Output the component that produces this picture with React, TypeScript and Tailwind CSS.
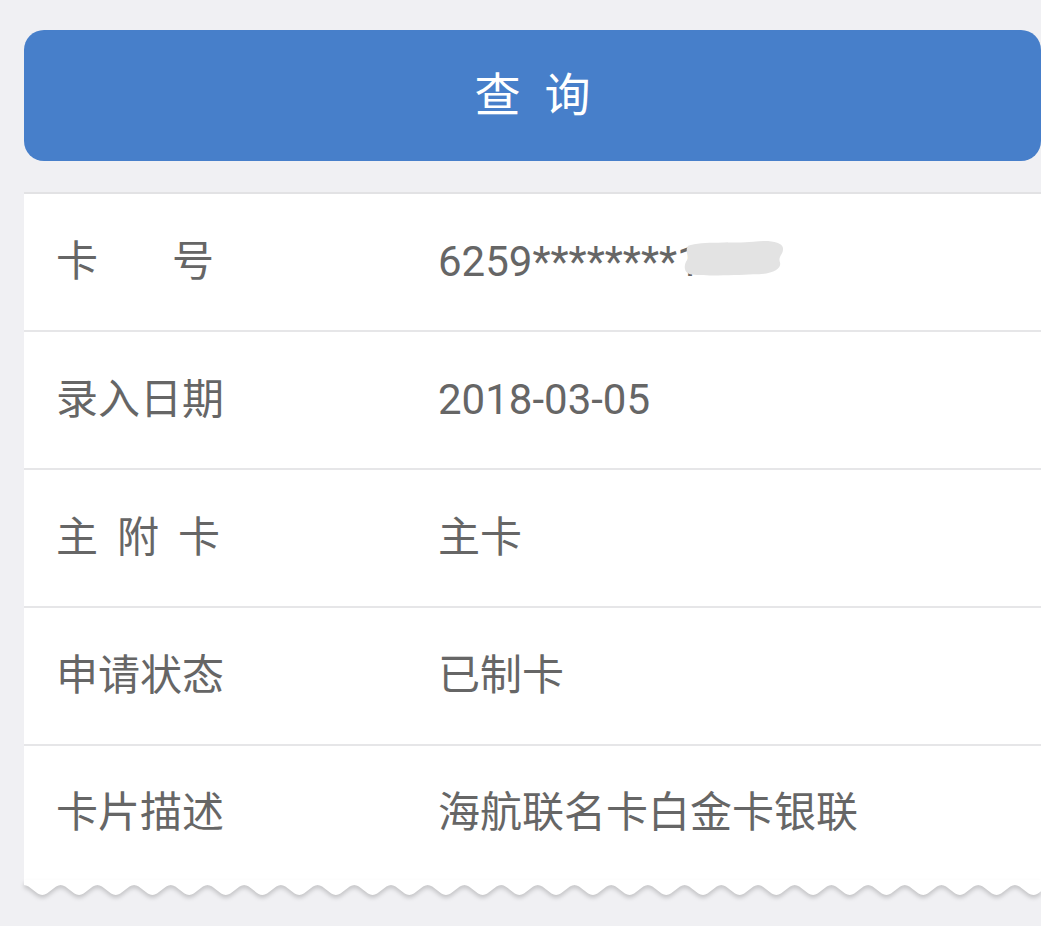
const rows: { label: string[]; value: string; w: string }[] = [
  { label: ["卡", "号"], value: "6259********1", w: "w-[158px]" },
  { label: ["录入日期"], value: "2018-03-05", w: "w-[168px]" },
  { label: ["主", "附", "卡"], value: "主卡", w: "w-[164px]" },
  { label: ["申请状态"], value: "已制卡", w: "w-[168px]" },
  { label: ["卡片描述"], value: "海航联名卡白金卡银联", w: "w-[168px]" },
];

// scalloped bottom edge of the receipt panel
const wavePath = (() => {
  const w = 1017;
  const p = 36.7;
  let d = "M0,0 L0,5";
  for (let x = 0; x < w + p; x += p) {
    d += ` C${(x + p / 6).toFixed(1)},5 ${(x + p / 3).toFixed(1)},15 ${(x + p / 2).toFixed(1)},15`;
    d += ` C${(x + (2 * p) / 3).toFixed(1)},15 ${(x + (5 * p) / 6).toFixed(1)},5 ${(x + p).toFixed(1)},5`;
  }
  d += ` L${w + p * 2},0 Z`;
  return d;
})();

const App = () => {
  return (
    <div className="min-h-screen w-full bg-[#f0f0f3] pl-[24px] pt-[30px] font-['Roboto','Noto_Sans_CJK_SC',sans-serif]">
      <div className="w-[1017px]">
        {/* Query button */}
        <button className="flex h-[131px] w-full items-center justify-center gap-6 rounded-[20px] bg-[#477fca] text-[46px] text-white">
          <span>查</span>
          <span>询</span>
        </button>

        {/* Result panel */}
        <div className="mt-[31px] border-t-2 border-[#e2e2e4] bg-white">
          {rows.map((row, i) => (
            <div
              key={i}
              className={`flex items-center pl-[32px] text-[42px] text-[#666666] ${
                i < rows.length - 1 ? "h-[138px] border-b-2 border-[#e6e6e8]" : "h-[134px]"
              }`}
            >
              <div className="w-[166px] shrink-0">
                <div className={`flex ${row.w} justify-between whitespace-nowrap leading-none`}>
                  {row.label.map((c, j) => (
                    <span key={j}>{c}</span>
                  ))}
                </div>
              </div>
              <div className="ml-[216px] whitespace-nowrap leading-none">
                {i === 0 ? (
                  <span className="relative inline-block">
                    6259********1
                    <svg
                      className="absolute left-[244px] top-[-4px]"
                      width="104"
                      height="42"
                      viewBox="0 0 102 40"
                    >
                      <path
                        d="M6,8 C20,3 50,6 70,4 C85,2 98,4 99,10 C100,16 94,18 96,24 C98,30 90,36 70,36 C50,37 20,38 8,36 C1,34 2,26 5,22 C8,18 2,14 6,8 Z"
                        fill="#e3e3e3"
                      />
                    </svg>
                  </span>
                ) : (
                  row.value
                )}
              </div>
            </div>
          ))}
        </div>
        <svg
          className="block drop-shadow-[0_3px_2px_rgba(0,0,0,0.18)]"
          width="1017"
          height="22"
          viewBox="0 0 1017 22"
        >
          <path d={wavePath} fill="#ffffff" />
        </svg>
      </div>
    </div>
  );
};

export default App;
